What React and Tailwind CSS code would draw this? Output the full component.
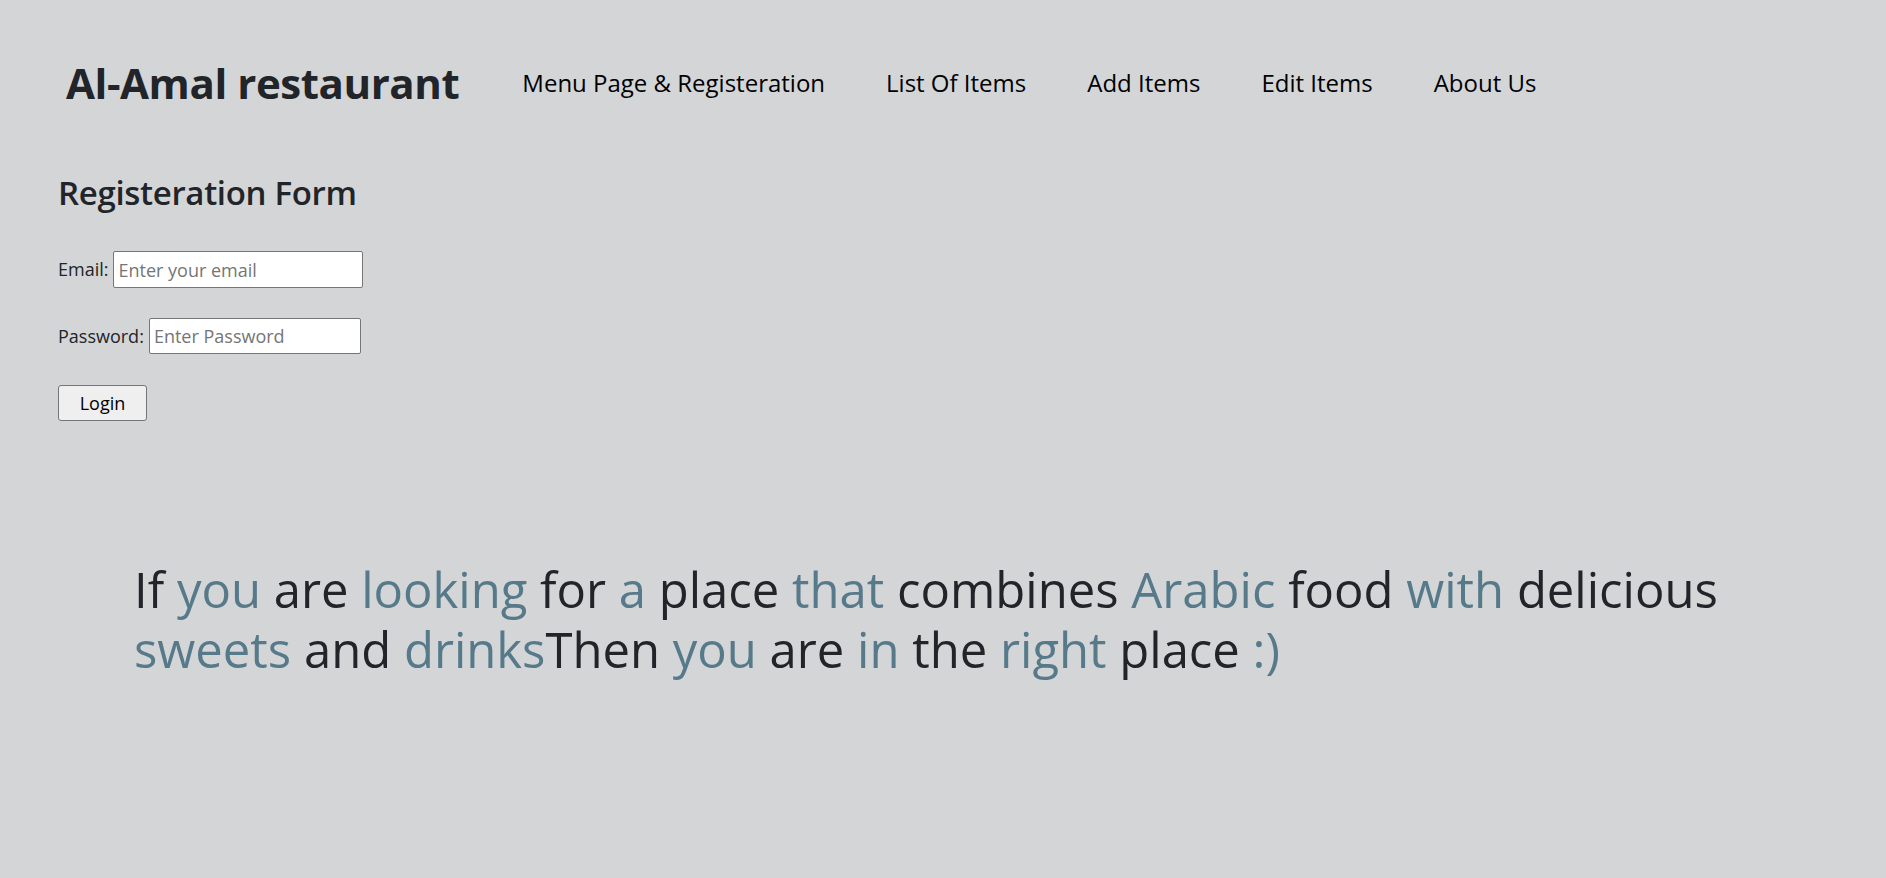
import React from "react";

const words = [
  ["If", 0], ["you", 1], ["are", 0], ["looking", 1], ["for", 0], ["a", 1], ["place", 0], ["that", 1],
  ["combines", 0], ["Arabic", 1], ["food", 0], ["with", 1], ["delicious", 0], ["sweets", 1], ["and", 0],
  ["drinks", 1, true], ["Then", 0], ["you", 1], ["are", 0], ["in", 1], ["the", 0], ["right", 1], ["place", 0], [":)", 1],
];

export default function App() {
  return (
    <div
      className="min-h-screen bg-[#d4d5d7] text-[#212529]"
      style={{ fontFamily: '"Open Sans", "Noto Sans", sans-serif' }}
    >
      <header className="flex items-center pl-[66px] pt-[59px] gap-[63px]">
        <h1 className="text-[42px] font-bold leading-[48px] tracking-[-0.01em]">Al-Amal restaurant</h1>
        <nav className="flex items-center gap-[61px] text-[24px] text-black">
          <a href="#">Menu Page &amp; Registeration</a>
          <a href="#">List Of Items</a>
          <a href="#">Add Items</a>
          <a href="#">Edit Items</a>
          <a href="#">About Us</a>
        </nav>
      </header>

      <section className="pl-[58px] pt-[66px]">
        <h2 className="text-[33px] font-semibold leading-[40px] tracking-[-0.01em]">Registeration Form</h2>
        <form className="mt-[38px] flex flex-col items-start text-[18px]">
          <div className="flex items-center gap-[5px]">
            <label>Email:</label>
            <input
              type="email"
              placeholder="Enter your email"
              className="w-[250px] h-[37px] bg-white border border-[#767676] rounded-[2px] px-[4px] text-[18px] placeholder:text-[#757575] outline-none"
            />
          </div>
          <div className="flex items-center gap-[5px] mt-[30px]">
            <label>Password:</label>
            <input
              type="password"
              placeholder="Enter Password"
              className="w-[212px] h-[36px] bg-white border border-[#767676] rounded-[2px] px-[4px] text-[18px] placeholder:text-[#757575] outline-none"
            />
          </div>
          <button
            type="button"
            className="mt-[31px] w-[89px] h-[36px] bg-[#efefef] border border-[#767676] rounded-[3px] text-[18px] text-black"
          >
            Login
          </button>
        </form>
      </section>

      <p className="mt-[138px] pl-[134px] pr-[120px] text-[49px] leading-[60px]">
        {words.map(([w, blue, noSpace], i) => (
          <React.Fragment key={i}>
            <span className={blue ? "text-[#577a8b]" : ""}>{w}</span>
            {i < words.length - 1 && !noSpace ? " " : ""}
          </React.Fragment>
        ))}
      </p>
    </div>
  );
}
